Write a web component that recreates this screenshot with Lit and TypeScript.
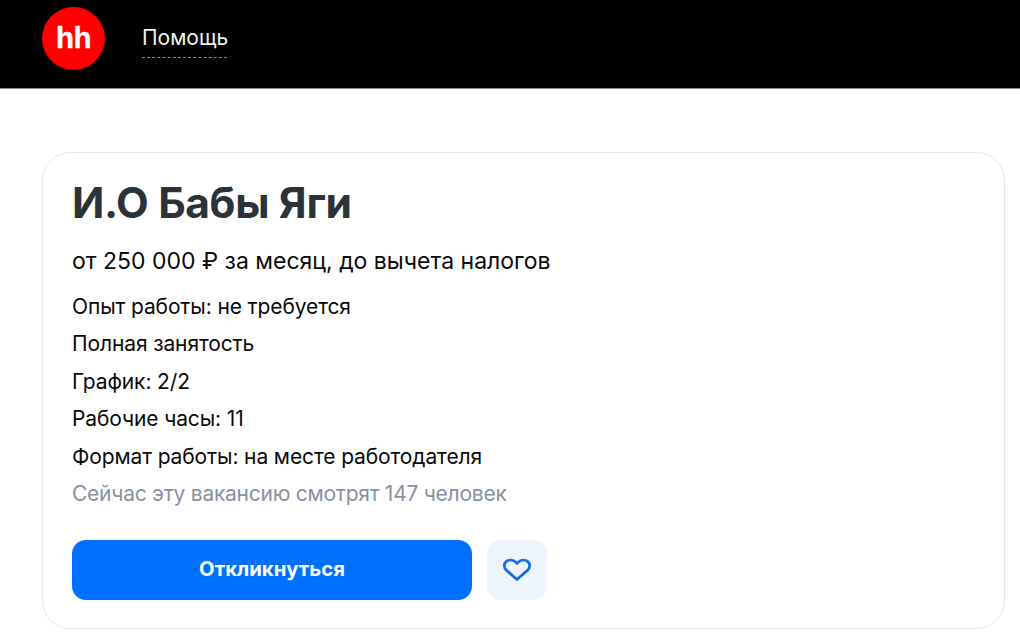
import { LitElement, html, css } from "lit";
import { customElement } from "lit/decorators.js";

@customElement("app-root")
export class AppRoot extends LitElement {
  static styles = css`
    :host { display: block; width: 1020px; height: 638px; overflow: hidden; background: #fff; font-family: Inter, "Noto Sans", sans-serif; }
    .top { height: 89px; background: #000; display: flex; align-items: flex-start; padding-left: 42px; gap: 37px; box-sizing: border-box; border-bottom: 1px solid #8a8a8a; }
    .logo { width: 63px; height: 63px; margin-top: 7px; border-radius: 50%; background: #f00; color: #fff; display: flex; align-items: center; justify-content: center; font: 700 29.5px/1 "Liberation Sans", sans-serif; letter-spacing: -0.5px; -webkit-text-stroke: 0.4px #fff; padding-bottom: 2px; box-sizing: border-box; }
    .help { margin-top: 22px; color: #f2f2ea; font-size: 21px; line-height: 32px; height: 35px; width: 85px; border-bottom: 1px dashed #888; white-space: nowrap; }
    .card { box-sizing: border-box; margin: 63px 0 0 42px; width: 962.5px; height: 477px; border: 1.5px solid #e7e8ea; border-radius: 28px; padding: 25px 29px 0 29px; }
    h1 { margin: 0; font-size: 42.5px; line-height: 50px; font-weight: 700; color: #2b3238; letter-spacing: -0.35px; }
    .pay { margin-top: 18px; font-size: 23px; line-height: 30px; color: #0a0a0a; }
    .rows { margin-top: 12px; display: flex; flex-direction: column; }
    .row { font-size: 21px; line-height: 37.4px; color: #0a0a0a; letter-spacing: -0.12px; white-space: nowrap; }
    .muted { color: #8792a2; letter-spacing: -0.25px; }
    .actions { margin-top: 27.5px; display: flex; gap: 15px; }
    .apply { width: 400px; height: 60px; border: 0; border-radius: 14px; background: #0070ff; color: #fff; font: 700 20.3px Inter, sans-serif; padding: 0 0 3px; }
    .fav { width: 60px; height: 60px; border: 0; border-radius: 14px; background: #edf4fd; display: flex; align-items: center; justify-content: center; padding: 0; }
    svg { display: block; }
  `;
  render() {
    return html`
      <div class="top">
        <div class="logo">hh</div>
        <div class="help">Помощь</div>
      </div>
      <div class="card">
        <h1>И.О Бабы Яги</h1>
        <div class="pay">от 250 000 ₽ за месяц, до вычета налогов</div>
        <div class="rows">
          <div class="row">Опыт работы: не требуется</div>
          <div class="row">Полная занятость</div>
          <div class="row">График: 2/2</div>
          <div class="row">Рабочие часы: 11</div>
          <div class="row">Формат работы: на месте работодателя</div>
          <div class="row muted">Сейчас эту вакансию смотрят 147 человек</div>
        </div>
        <div class="actions">
          <button class="apply">Откликнуться</button>
          <button class="fav" aria-label="В избранное">
            <svg width="30" height="24" viewBox="0 0 30 24" fill="none">
              <path d="M15 21.5 L4.6 12.4 C1.6 9.6 1.6 5.6 4.4 3.4 C7.4 1.2 11.8 1.8 15 5.4 C18.2 1.8 22.6 1.2 25.6 3.4 C28.4 5.6 28.4 9.6 25.4 12.4 Z" stroke="#1a6fd8" stroke-width="2.8" stroke-linejoin="round"/>
            </svg>
          </button>
        </div>
      </div>
    `;
  }
}
